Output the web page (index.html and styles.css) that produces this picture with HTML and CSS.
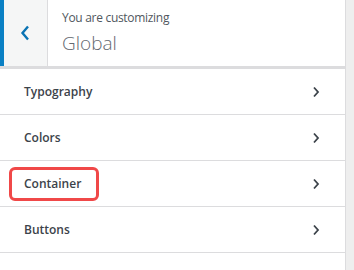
FILE: index.html
```html
<!DOCTYPE html>
<html lang="en">
<head>
  <meta charset="UTF-8" />
  <title>Customizer - Global</title>
  <link rel="stylesheet" href="styles.css">
</head>
<body>
  <div class="panel">
    <div class="panel-head">
      <button class="back-btn" aria-label="Back">
        <svg width="10" height="16" viewBox="0 0 10 16"><path d="M8 1.5 L2.5 8 L8 14.5" fill="none" stroke="#0a73b3" stroke-width="2.4"/></svg>
      </button>
      <div class="head-title">
        <span class="head-sub">You are customizing</span>
        <span class="head-name">Global</span>
      </div>
    </div>

    <ul class="section-list">
      <li class="section-item"><span>Typography</span><svg class="chev" width="8" height="12" viewBox="0 0 8 12"><path d="M2 1.5 L6 6 L2 10.5" fill="none" stroke="#3c434a" stroke-width="1.8"/></svg></li>
      <li class="section-item"><span>Colors</span><svg class="chev" width="8" height="12" viewBox="0 0 8 12"><path d="M2 1.5 L6 6 L2 10.5" fill="none" stroke="#3c434a" stroke-width="1.8"/></svg></li>
      <li class="section-item"><span class="highlight">Container</span><svg class="chev" width="8" height="12" viewBox="0 0 8 12"><path d="M2 1.5 L6 6 L2 10.5" fill="none" stroke="#3c434a" stroke-width="1.8"/></svg></li>
      <li class="section-item"><span>Buttons</span><svg class="chev" width="8" height="12" viewBox="0 0 8 12"><path d="M2 1.5 L6 6 L2 10.5" fill="none" stroke="#3c434a" stroke-width="1.8"/></svg></li>
    </ul>
  </div>
</body>
</html>
```

FILE: styles.css
```css
body { margin: 0; background: #eeeeee; font-family: "Open Sans", "Noto Sans", sans-serif; }
.panel { width: 345px; height: 270px; background: #fff; border-right: 1px solid #dcdcde; }
.panel-head { display: flex; height: 66px; border-bottom: 3px solid #dcdcde; }
.back-btn {
  width: 48px; height: 66px; padding: 0; border: none; border-left: 4px solid #0a80c4;
  border-right: 1px solid #dcdcde; background: #f5f6f6; display: flex; align-items: center; justify-content: center;
}
.back-btn svg { margin-left: -2px; margin-top: 0; }
.head-title { display: flex; flex-direction: column; padding: 9px 0 0 14px; color: #50575e; }
.head-sub { font-size: 12px; line-height: 18px; letter-spacing: -0.3px; }
.head-name { font-size: 19px; font-weight: 300; line-height: 28px; margin-top: 2px; color: #646970; }
.section-list { list-style: none; margin: 0; padding: 0; }
.section-item {
  display: flex; justify-content: space-between; align-items: center; height: 45px;
  border-bottom: 1px solid #dcdcde; padding: 0 25px 0 24px; font-size: 12px; font-weight: 600; color: #3c434a;
}
.chev { margin-top: 1px; }
.highlight {
  display: inline-block; border: 3px solid #f04848; border-radius: 6px;
  padding: 5px 15px 6px 12px; margin: 0 -18px 0 -15px;
}
```
